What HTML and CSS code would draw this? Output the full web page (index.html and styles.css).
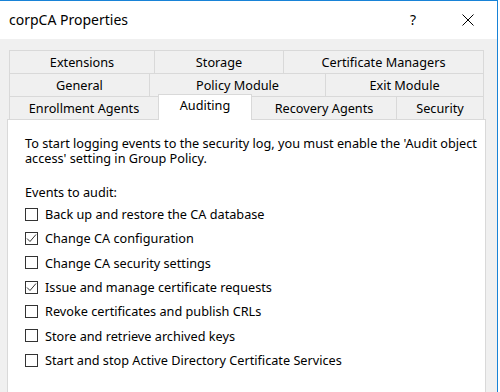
FILE: index.html
```html
<!DOCTYPE html>
<html lang="en">
<head>
    <meta charset="UTF-8">
    <title>corpCA Properties</title>
<link rel="stylesheet" href="styles.css">
</head>
<body>
    <div class="window">
        <div class="titlebar">
            <span class="title">corpCA Properties</span>
            <span class="help">?</span>
            <span class="close">
                <svg width="12" height="12" viewBox="0 0 12 12"><path d="M0.5 0.5L11.5 11.5M11.5 0.5L0.5 11.5" stroke="#000" stroke-width="1"/></svg>
            </span>
        </div>
        <div class="body">
            <div class="tabs">
                <div class="row">
                    <div class="tab w145">Extensions</div>
                    <div class="tab w129">Storage</div>
                    <div class="tab w201 last">Certificate Managers</div>
                </div>
                <div class="row">
                    <div class="tab w140">General</div>
                    <div class="tab w176">Policy Module</div>
                    <div class="tab w159 last">Exit Module</div>
                </div>
                <div class="row">
                    <div class="tab w149">Enrollment Agents</div>
                    <div class="tab w93 active">Auditing</div>
                    <div class="tab w145">Recovery Agents</div>
                    <div class="tab w88 last">Security</div>
                </div>
            </div>
            <div class="panel">
                <p class="intro">To start logging events to the security log, you must enable the 'Audit object access' setting in Group Policy.</p>
                <p class="caption">Events to audit:</p>
                <ul class="checks">
                    <li><span class="box"></span>Back up and restore the CA database</li>
                    <li><span class="box"><svg width="11" height="11" viewBox="0 0 11 11"><path d="M1 5.5L4 8.5L10 1.5" fill="none" stroke="#333" stroke-width="1"/></svg></span>Change CA configuration</li>
                    <li><span class="box"></span>Change CA security settings</li>
                    <li><span class="box"><svg width="11" height="11" viewBox="0 0 11 11"><path d="M1 5.5L4 8.5L10 1.5" fill="none" stroke="#333" stroke-width="1"/></svg></span>Issue and manage certificate requests</li>
                    <li><span class="box"></span>Revoke certificates and publish CRLs</li>
                    <li><span class="box"></span>Store and retrieve archived keys</li>
                    <li><span class="box"></span>Start and stop Active Directory Certificate Services</li>
                </ul>
            </div>
        </div>
    </div>
</body>
</html>
```

FILE: styles.css
```css
html, body{
    margin: 0;
    background: #fff;
    overflow: hidden;
}
body{
    font-family: "Noto Sans", "Liberation Sans", Arial, sans-serif;
    font-size: 12.7px;
    color: #000;
}
.window{
    width: 497px;
    height: 391px;
    border-top: 1px solid #1883d7;
    border-right: 1px solid #1883d7;
    background: #f0f0f0;
    display: flex;
    flex-direction: column;
}
.titlebar{
    height: 38px;
    background: #fff;
    display: flex;
    align-items: center;
    flex-shrink: 0;
}
.title{
    font-size: 14px;
    margin-left: 9px;
    flex: 1;
    margin-top: -1px;
}
.help{
    font-size: 14px;
    width: 14px;
    margin-right: 38px;
    margin-top: -1px;
}
.close{
    display: flex;
    margin-right: 23px;
    margin-top: -1px;
}
.body{
    flex: 1;
    padding-top: 11px;
}
.tabs{
    padding-left: 9px;
}
.row{
    display: flex;
    height: 23px;
}
.tab{
    box-sizing: border-box;
    height: 23px;
    border-top: 1px solid #d9d9d9;
    border-left: 1px solid #d9d9d9;
    background: #f0f0f0;
    text-align: center;
    line-height: 22px;
}
.tab.last{
    border-right: 1px solid #d9d9d9;
}
.tab.active{
    background: #fff;
    height: 26px;
    margin-top: -2px;
    margin-bottom: -1px;
    line-height: 21px;
    position: relative;
    z-index: 1;
    border-right: 1px solid #d9d9d9;
    margin-right: -1px;
}
.w145{ width: 145px; }
.w129{ width: 129px; }
.w201{ width: 201px; }
.w140{ width: 140px; }
.w176{ width: 176px; }
.w159{ width: 159px; }
.w149{ width: 149px; }
.w93{ width: 94px; }
.w88{ width: 88px; }
.panel{
    margin-left: 7px;
    width: 479px;
    height: 275px;
    background: #fff;
    border: 1px solid #d9d9d9;
    border-bottom: none;
    padding: 16px 0 0 17px;
    box-sizing: border-box;
}
.intro{
    margin: 0;
    line-height: 15px;
}
.caption{
    margin: 19px 0 0;
    line-height: 15px;
}
.checks{
    list-style: none;
    margin: 2px 0 0;
    padding: 0;
}
.checks li{
    height: 24.33px;
    display: flex;
    align-items: center;
}
.box{
    box-sizing: border-box;
    width: 13px;
    height: 13px;
    border: 1px solid #333;
    margin-right: 7px;
    display: flex;
    align-items: center;
    justify-content: center;
}
```
